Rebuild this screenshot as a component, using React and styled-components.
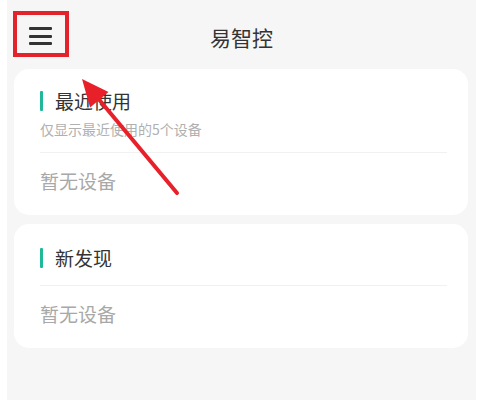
import React from "react";
import styled, { createGlobalStyle } from "styled-components";

const Global = createGlobalStyle`
  html, body { margin: 0; padding: 0; background: #ffffff; }
  body { font-family: "Noto Sans CJK SC", "Noto Sans", sans-serif; }
`;

const Screen = styled.div`
  position: relative;
  margin-left: 7px;
  width: 469px;
  height: 400px;
  background: #f6f6f6;
  overflow: hidden;
`;

const Header = styled.header`
  height: 69px;
  display: flex;
  align-items: center;
  justify-content: center;
  position: relative;
`;

const Title = styled.h1`
  margin: 0;
  font-size: 21px;
  font-weight: 400;
  color: #333;
  line-height: 26px;
  padding-top: 4px;
`;

const MenuButton = styled.div`
  position: absolute;
  left: 22px;
  top: 27px;
  width: 23px;
  height: 18px;
  display: flex;
  flex-direction: column;
  justify-content: space-between;
`;

const MenuLine = styled.span`
  display: block;
  height: 3px;
  background: #333;
  border-radius: 1px;
`;

const Highlight = styled.div`
  position: absolute;
  left: 6px;
  top: 11px;
  width: 48px;
  height: 38px;
  border: 4px solid #e3232b;
`;

const Cards = styled.main`
  display: flex;
  flex-direction: column;
  gap: 9px;
  padding: 0 8px 0 7px;
`;

const Card = styled.section`
  background: #ffffff;
  border-radius: 15px;
  padding: ${(p) => p.$pt}px 21px ${(p) => p.$pb}px 26px;
  display: flex;
  flex-direction: column;
`;

const CardTitle = styled.div`
  display: flex;
  align-items: center;
  gap: 12px;
  height: 20px;
  line-height: 20px;
  font-size: 19px;
  color: #333;
`;

const Bar = styled.span`
  width: 3px;
  height: 20px;
  background: #1fb99a;
  border-radius: 1px;
`;

const Subtitle = styled.div`
  margin-top: 10px;
  font-size: 14px;
  line-height: 16px;
  color: #b0b0b0;
`;

const Divider = styled.div`
  height: 1px;
  background: #f1f1f1;
  margin-top: ${(p) => p.$mt}px;
`;

const Empty = styled.div`
  margin-top: 17px;
  font-size: 19px;
  line-height: 22px;
  color: #a8a8a8;
`;

const Arrow = styled.svg`
  position: absolute;
  left: 0;
  top: 0;
  pointer-events: none;
`;

export default function App() {
  const tip = [75, 79];
  const end = [170, 193];
  const dx = tip[0] - end[0];
  const dy = tip[1] - end[1];
  const len = Math.hypot(dx, dy);
  const ux = dx / len;
  const uy = dy / len;
  const hl = 27;
  const hw = 12;
  const bx = tip[0] - ux * hl;
  const by = tip[1] - uy * hl;
  const p1 = [bx - uy * hw, by + ux * hw];
  const p2 = [bx + uy * hw, by - ux * hw];

  return (
    <>
      <Global />
      <Screen>
        <Header>
          <MenuButton>
            <MenuLine />
            <MenuLine />
            <MenuLine />
          </MenuButton>
          <Title>易智控</Title>
          <Highlight />
        </Header>
        <Cards>
          <Card $pt={22} $pb={23}>
            <CardTitle>
              <Bar />
              最近使用
            </CardTitle>
            <Subtitle>仅显示最近使用的5个设备</Subtitle>
            <Divider $mt={15} />
            <Empty>暂无设备</Empty>
          </Card>
          <Card $pt={24} $pb={23}>
            <CardTitle>
              <Bar />
              新发现
            </CardTitle>
            <Divider $mt={17} />
            <Empty>暂无设备</Empty>
          </Card>
        </Cards>
        <Arrow width="469" height="400" viewBox="0 0 469 400">
          <line
            x1={end[0]}
            y1={end[1]}
            x2={bx + ux * 4}
            y2={by + uy * 4}
            stroke="#e8202a"
            strokeWidth="4"
            strokeLinecap="round"
          />
          <polygon
            points={`${tip[0]},${tip[1]} ${p1[0]},${p1[1]} ${p2[0]},${p2[1]}`}
            fill="#e8202a"
          />
        </Arrow>
      </Screen>
    </>
  );
}
